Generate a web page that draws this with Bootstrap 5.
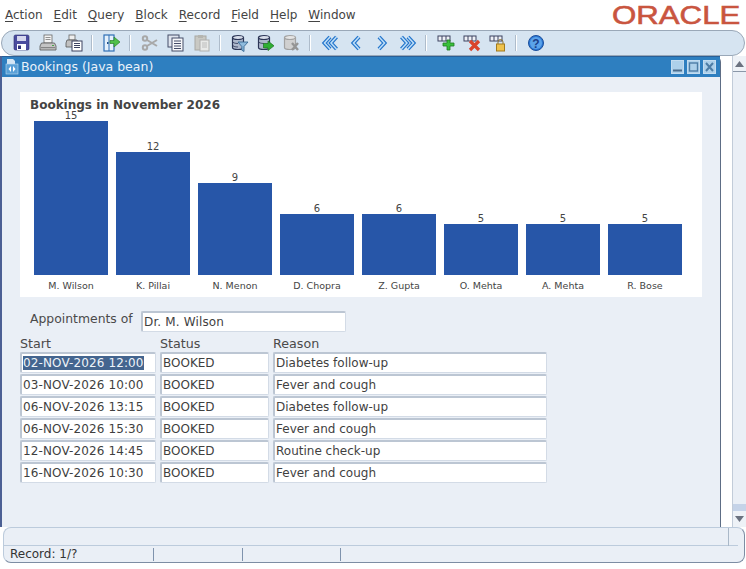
<!DOCTYPE html>
<html lang="en">
<head>
<meta charset="utf-8">
<title>Bookings</title>
<link href="https://cdn.jsdelivr.net/npm/bootstrap@5.3.0/dist/css/bootstrap.min.css" rel="stylesheet">
<style>
html,body{height:569px;overflow:hidden;background:#fff}
body{font-family:"DejaVu Sans",sans-serif;font-size:12px;color:#333;line-height:1}
.menu-row{height:30px;padding-left:5px}
.menu-row span{color:#444;margin-right:11px}
.menu-row u{text-underline-offset:2px;text-decoration-thickness:1px}
.logo-txt{position:absolute;left:612px;top:1px;width:108px;height:29px;font-family:"Liberation Sans",sans-serif;font-size:26px;line-height:29px;color:#c9553f;transform:scaleX(1.2);transform-origin:left center;white-space:nowrap;-webkit-text-stroke:.6px #c9553f}
.tool-row{height:26px;margin-left:1px;margin-right:1px;padding-left:7px;background:#d6e4f1;border:1px solid #9aa8b8;border-radius:13px}
.ti{width:26px;height:20px;flex:none}
.ts{width:12px;height:18px;flex:none}
.ts i{display:block;width:2px;height:16px;margin:1px 0 0 4px;background:#fff;border-left:1px solid #aebccb}
.work{height:471px}
.win{width:721px;background:#eaeff6;border-left:2px solid #4c6094;border-right:1px solid #5d6d85;border-top-right-radius:6px}
.win-title{height:21px;background:#2e7fc0;border-top:1px solid #2a5f96;color:#eaf2fa;font-size:12.5px;padding-left:3px;padding-right:4px}
.win-title .name{margin-left:2px}
.wb{width:13px;height:14px;background:#add0ea;border:1px solid #c3dcf0;margin-left:3px;display:block}
.gutter{width:11px;background:#fff}
.sbar{width:14px;background:#eaeff6;border-left:1px solid #c2ccd9}
.sb-btn{height:16px;background:#eef2f7;border-bottom:1px solid #8b97a8}
.sb-btn.lo{border-bottom:0}
.sb-end{height:7px;background:#c5d3e8}
.chart{width:682px;height:205px;margin-left:18px;margin-top:15px;background:#fff;overflow:hidden}
.chart-title{height:18px;padding-left:10px;padding-top:7px;font-size:12px;font-weight:700;color:#444}
.plot{height:187px;padding-left:14px;gap:8px}
.pcol{width:74px;height:187px}
.pval{height:11px;font-size:10px;color:#444;text-align:center;line-height:11px}
.pbar{background:#2756a8}
.pname{height:22px;padding-top:6px;font-size:9.5px;color:#444;text-align:center;line-height:10px}
.appt{margin:14px 0 0 28px;height:21px}
.appt-label{width:111px;margin-top:-5px;font-size:12.4px;color:#4a4a4a}
.fld{background:#fff;border:1px solid #d3dbe6;border-top:2px solid #bcc6d3;border-left:2px solid #bcc6d3;border-radius:2px;height:21px;font-size:12px;padding-left:1px;color:#3f3f3f;display:flex;align-items:center;white-space:nowrap;overflow:hidden}
.f-doc{width:205px;letter-spacing:.15px}
.f-date{letter-spacing:.12px}
.grid-zone{margin-left:18px;margin-top:5px;display:grid;grid-template-columns:136px 109px 274px;column-gap:4px;row-gap:1px;grid-template-rows:14px;grid-auto-rows:21px;justify-content:start}
.ghead{font-size:12.7px;color:#4a4a4a;line-height:14px}
.sel{background:#44658f;color:#eef3f8;padding:1px 0}
.status{height:36px;margin-left:3px;margin-right:1px;background:#eaeff6;border:1px solid #bccbdc;border-bottom:1px solid #7d8da3;border-right:1px solid #7d8da3;border-radius:8px}
.st-top{height:18px;border-bottom:1px solid #bccbdc;margin-right:6px;justify-content:flex-end}
.st-top i{display:block;width:1px;height:18px;background:#aab8c8;margin-right:9px}
.st-low{height:16px;font-size:12px;color:#333}
.st-c1{width:150px;padding-left:6px;border-right:1px solid #7f93ad;height:13px;line-height:13px}
.st-c2{width:89px;border-right:1px solid #7f93ad;height:13px}
.st-c3{width:98px;border-right:1px solid #7f93ad;height:13px}
</style>
</head>
<body class="position-relative">
<div class="menu-row d-flex align-items-center">
<span><u>A</u>ction</span><span><u>E</u>dit</span><span><u>Q</u>uery</span><span><u>B</u>lock</span><span><u>R</u>ecord</span><span><u>F</u>ield</span><span><u>H</u>elp</span><span><u>W</u>indow</span>
</div>
<div class="logo-txt">ORACLE</div>

<div class="tool-row d-flex align-items-center">
<!-- save -->
<svg class="ti" viewBox="-5 -2 26 20"><rect x="0" y="0" width="15" height="15" rx="1.5" fill="#4a4c9e" stroke="#2b2c70" stroke-width=".6"/><rect x="3" y="1" width="9" height="5" fill="#d5d7ee"/><rect x="3" y="9" width="9" height="6" fill="#fff"/><rect x="4" y="10.5" width="3" height="3.5" fill="#30327c"/></svg>
<!-- print -->
<svg class="ti" viewBox="-5 -2 26 20"><rect x="4" y="0" width="8" height="8" fill="#f4f4f4" stroke="#666" stroke-width=".8"/><path d="M5.500 2.500h5M5.500 4.500h5" stroke="#777" stroke-width=".8"/><path d="M1.500 8h13l1.500 3v4H0v-4z" fill="#c4c4c4" stroke="#555" stroke-width=".8"/><rect x="1" y="12" width="14" height="1.200" fill="#858585"/><rect x="12" y="10" width="2" height="1" fill="#48a348"/></svg>
<!-- print preview -->
<svg class="ti" viewBox="-5 -2 26 20"><rect x="3" y="0" width="6" height="5" fill="#eee" stroke="#666" stroke-width=".8"/><path d="M1 5h10l1 3v4H0V8z" fill="#c0c0c0" stroke="#555" stroke-width=".8"/><rect x="6" y="6" width="10" height="10" fill="#fff" stroke="#3c4260"/><path d="M8 8.500h6M8 10.500h6M8 12.500h6" stroke="#3c4260"/></svg>
<span class="ts"><i></i></span>
<!-- exit -->
<svg class="ti" viewBox="-5 -2 26 20"><rect x="0" y="0" width="10" height="16" fill="#e4f0fb" stroke="#2f6fb5" stroke-width="1.200"/><path d="M5 0v16" stroke="#2f6fb5"/><rect x="3" y="7" width="1.500" height="2" fill="#20508c"/><path d="M6 5.500h4V2l6 5-6 5V8.500H6z" fill="#4fc04a" stroke="#2d7f2a" stroke-width=".7"/></svg>
<span class="ts"><i></i></span>
<!-- cut -->
<svg class="ti" viewBox="-5 -2 26 20"><g fill="none" stroke="#a8a8a8" stroke-width="2"><circle cx="3" cy="3.500" r="2.200"/><circle cx="3" cy="12.500" r="2.200"/><path d="M5 5l10 6M5 11l10-6"/></g></svg>
<!-- copy -->
<svg class="ti" viewBox="-5 -2 26 20"><rect x="0" y="0" width="11" height="12" fill="#dfe4ee" stroke="#454c68"/><rect x="4" y="3" width="11" height="13" fill="#f6f7fa" stroke="#454c68"/><path d="M6 6h7M6 8.500h7M6 11h7M6 13.500h7" stroke="#454c68"/></svg>
<!-- paste -->
<svg class="ti" viewBox="-5 -2 26 20"><rect x="1" y="1" width="11" height="14" fill="#c9c9c4" stroke="#a8a8a4"/><rect x="4" y="0" width="5" height="3" fill="#b5b5b0"/><rect x="6" y="5" width="9" height="11" fill="#e8e9e8" stroke="#b0b0ae"/><path d="M8 8h5M8 10h5M8 12h5" stroke="#bcbcbc"/></svg>
<span class="ts"><i></i></span>
<!-- query -->
<svg class="ti" viewBox="-5 -2 26 20"><path d="M.5 2.500v10c0 1.200 2.500 2 5.500 2s5.500-.8 5.500-2v-10" fill="#aeb8cc" stroke="#2c3556" stroke-width="1.200"/><ellipse cx="6" cy="2.500" rx="5.500" ry="2" fill="#d8deea" stroke="#2c3556" stroke-width="1.200"/><path d="M.5 6.500c0 1.200 2.500 2 5.500 2M.5 10c0 1.200 2.500 2 5.500 2" fill="none" stroke="#2c3556" stroke-width=".8"/><path d="M6 7h10l-4 4.500v5l-2.200-1.300v-3.700z" fill="#8fbbdd" stroke="#2f5f8d" stroke-width=".8"/></svg>
<!-- execute -->
<svg class="ti" viewBox="-5 -2 26 20"><path d="M.5 2.500v10c0 1.200 2.500 2 5.500 2s5.500-.8 5.500-2v-10" fill="#aeb8cc" stroke="#2c3556" stroke-width="1.200"/><ellipse cx="6" cy="2.500" rx="5.500" ry="2" fill="#d8deea" stroke="#2c3556" stroke-width="1.200"/><path d="M.5 6.500c0 1.200 2.500 2 5.500 2" fill="none" stroke="#2c3556" stroke-width=".8"/><path d="M5.500 8.500h4.500V6l6 4.800-6 4.800v-2.600H5.500z" fill="#2fae34" stroke="#1c6e20" stroke-width=".7"/></svg>
<!-- cancel -->
<svg class="ti" viewBox="-5 -2 26 20"><path d="M.5 2.500v10c0 1.200 2.500 2 5.500 2s5.500-.8 5.500-2v-10" fill="#d0d0d0" stroke="#a2a2a2" stroke-width="1.200"/><ellipse cx="6" cy="2.500" rx="5.500" ry="2" fill="#e4e4e4" stroke="#a2a2a2" stroke-width="1.200"/><path d="M8 8l6 7M14 8l-6 7" stroke="#959595" stroke-width="2.400"/></svg>
<span class="ts"><i></i></span>
<!-- first -->
<svg class="ti" viewBox="-5 -2 26 20"><g fill="none" stroke-linejoin="miter"><path d="M8 2L2.500 8 8 14M14.500 2L9 8l5.500 6" stroke="#2576cc" stroke-width="4"/><path d="M8 2L2.500 8 8 14M14.500 2L9 8l5.500 6" stroke="#bfdff8" stroke-width="1.500"/></g></svg>
<!-- prev -->
<svg class="ti" viewBox="-5 -2 26 20"><g fill="none"><path d="M11 2L5.500 8l5.500 6" stroke="#2576cc" stroke-width="4"/><path d="M11 2L5.500 8l5.500 6" stroke="#bfdff8" stroke-width="1.500"/></g></svg>
<!-- next -->
<svg class="ti" viewBox="-5 -2 26 20"><g fill="none"><path d="M5 2l5.500 6L5 14" stroke="#2576cc" stroke-width="4"/><path d="M5 2l5.500 6L5 14" stroke="#bfdff8" stroke-width="1.500"/></g></svg>
<!-- last -->
<svg class="ti" viewBox="-5 -2 26 20"><g fill="none"><path d="M1.500 2L7 8l-5.500 6M8 2l5.500 6L8 14" stroke="#2576cc" stroke-width="4"/><path d="M1.500 2L7 8l-5.500 6M8 2l5.500 6L8 14" stroke="#bfdff8" stroke-width="1.500"/></g></svg>
<span class="ts"><i></i></span>
<!-- add -->
<svg class="ti" viewBox="-5 -2 26 20"><rect x="0" y="1" width="12" height="5" fill="#eef0f6" stroke="#3c4260"/><path d="M4 1v5M8 1v5" stroke="#3c4260"/><path d="M8 5h3v3h4v3h-4v4H8v-4H4V8h4z" fill="#39c13a" stroke="#1f7a22" stroke-width=".8" transform="translate(1 0)"/></svg>
<!-- delete -->
<svg class="ti" viewBox="-5 -2 26 20"><rect x="0" y="1" width="12" height="5" fill="#eef0f6" stroke="#3c4260"/><path d="M4 1v5M8 1v5" stroke="#3c4260"/><path d="M6 6l9 9M15 6l-9 9" stroke="#d9442c" stroke-width="3.200"/></svg>
<!-- lock -->
<svg class="ti" viewBox="-5 -2 26 20"><rect x="0" y="1" width="12" height="5" fill="#eef0f6" stroke="#3c4260"/><path d="M4 1v5M8 1v5" stroke="#3c4260"/><path d="M8 9V7a2.500 2.500 0 0 1 5 0v2" fill="none" stroke="#8a7338"/><rect x="6.500" y="9" width="8" height="7" fill="#efc24c" stroke="#a27a1e"/></svg>
<span class="ts"><i></i></span>
<!-- help -->
<svg class="ti" viewBox="-5 -2 26 20"><circle cx="8" cy="8" r="7.500" fill="#2e79d6" stroke="#1b4f9b"/><circle cx="8" cy="8" r="6" fill="#5ba3ea"/><text x="8" y="12.500" text-anchor="middle" font-family="Liberation Sans" font-size="12" font-weight="700" fill="#1b3f8b">?</text></svg>
</div>

<div class="work d-flex">
<main class="win">
<div class="win-title d-flex align-items-center">
<svg width="14" height="16" viewBox="0 0 14 16" class="flex-none"><path d="M2 0h6l2 2v3H2z" fill="#d3e6f5"/><rect x="1" y="5" width="12" height="10" fill="#5aa1d8" stroke="#bcd9ef" stroke-width=".6"/><path d="M6 7L3.500 10 6 13zM8 7l2.500 3L8 13z" fill="#fff"/></svg>
<span class="name">Bookings (Java bean)</span>
<span class="ms-auto d-flex">
<span class="wb"><svg width="11" height="12" viewBox="0 0 11 12" class="d-block"><rect x="1" y="8.500" width="9" height="2" fill="#4d6d8c"/></svg></span>
<span class="wb"><svg width="11" height="12" viewBox="0 0 11 12" class="d-block"><rect x="1.500" y="2" width="8" height="8" fill="none" stroke="#4d7da6" stroke-width="1.400"/></svg></span>
<span class="wb"><svg width="11" height="12" viewBox="0 0 11 12" class="d-block"><path d="M2 2l7 8M9 2l-7 8" stroke="#4d7da6" stroke-width="2"/></svg></span>
</span>
</div>
<section class="chart">
<div class="chart-title">Bookings in November 2026</div>
<div class="plot d-flex">
<div class="pcol d-flex flex-column justify-content-end"><div class="pval">15</div><div class="pbar" style="height:154px"></div><div class="pname">M. Wilson</div></div>
<div class="pcol d-flex flex-column justify-content-end"><div class="pval">12</div><div class="pbar" style="height:123px"></div><div class="pname">K. Pillai</div></div>
<div class="pcol d-flex flex-column justify-content-end"><div class="pval">9</div><div class="pbar" style="height:92px"></div><div class="pname">N. Menon</div></div>
<div class="pcol d-flex flex-column justify-content-end"><div class="pval">6</div><div class="pbar" style="height:61px"></div><div class="pname">D. Chopra</div></div>
<div class="pcol d-flex flex-column justify-content-end"><div class="pval">6</div><div class="pbar" style="height:61px"></div><div class="pname">Z. Gupta</div></div>
<div class="pcol d-flex flex-column justify-content-end"><div class="pval">5</div><div class="pbar" style="height:51px"></div><div class="pname">O. Mehta</div></div>
<div class="pcol d-flex flex-column justify-content-end"><div class="pval">5</div><div class="pbar" style="height:51px"></div><div class="pname">A. Mehta</div></div>
<div class="pcol d-flex flex-column justify-content-end"><div class="pval">5</div><div class="pbar" style="height:51px"></div><div class="pname">R. Bose</div></div>
</div>
</section>
<div class="appt d-flex align-items-center"><div class="appt-label">Appointments of</div><div class="fld f-doc">Dr. M. Wilson</div></div>
<div class="grid-zone">
<div class="ghead">Start</div><div class="ghead">Status</div><div class="ghead">Reason</div>
<div class="fld f-date"><span class="sel">02-NOV-2026 12:00</span></div><div class="fld">BOOKED</div><div class="fld">Diabetes follow-up</div>
<div class="fld f-date">03-NOV-2026 10:00</div><div class="fld">BOOKED</div><div class="fld">Fever and cough</div>
<div class="fld f-date">06-NOV-2026 13:15</div><div class="fld">BOOKED</div><div class="fld">Diabetes follow-up</div>
<div class="fld f-date">06-NOV-2026 15:30</div><div class="fld">BOOKED</div><div class="fld">Fever and cough</div>
<div class="fld f-date">12-NOV-2026 14:45</div><div class="fld">BOOKED</div><div class="fld">Routine check-up</div>
<div class="fld f-date">16-NOV-2026 10:30</div><div class="fld">BOOKED</div><div class="fld">Fever and cough</div>
</div>
</main>
<div class="gutter"></div>
<aside class="sbar d-flex flex-column">
<div class="sb-btn d-flex align-items-center justify-content-center"><svg width="9" height="6" viewBox="0 0 9 6"><path d="M4.500 0L9 6H0z" fill="#6b7280"/></svg></div>
<div class="flex-grow-1"></div>
<div class="sb-end"></div>
<div class="sb-btn lo d-flex align-items-center justify-content-center"><svg width="9" height="6" viewBox="0 0 9 6"><path d="M0 0h9L4.500 6z" fill="#6b7280"/></svg></div>
</aside>
</div>

<footer class="status">
<div class="st-top d-flex"><i></i></div>
<div class="st-low d-flex align-items-center"><div class="st-c1">Record: 1/?</div><div class="st-c2"></div><div class="st-c3"></div></div>
</footer>
</body>
</html>
